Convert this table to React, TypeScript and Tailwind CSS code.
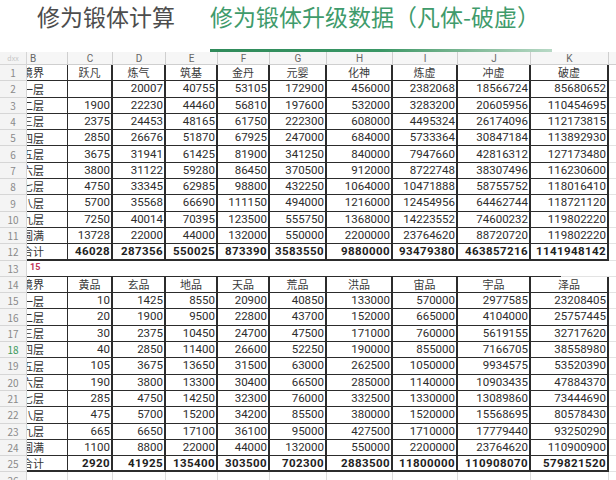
import React from "react";

// column widths for B..K, then L fills the rest
const colW = [
  "w-[41px]",
  "w-[45px]",
  "w-[53px]",
  "w-[52px]",
  "w-[52px]",
  "w-[57px]",
  "w-[66px]",
  "w-[65px]",
  "w-[73px]",
  "w-[78px]",
];

const letters = ["B", "C", "D", "E", "F", "G", "H", "I", "J", "K"];

const head1 = ["境界", "跃凡", "炼气", "筑基", "金丹", "元婴", "化神", "炼虚", "冲虚", "破虚"];
const head2 = ["境界", "黄品", "玄品", "地品", "天品", "荒品", "洪品", "宙品", "宇品", "泽品"];

const table1: (string | number)[][] = [
  ["一层", "", 20007, 40755, 53105, 172900, 456000, 2382068, 18566724, 85680652],
  ["二层", 1900, 22230, 44460, 56810, 197600, 532000, 3283200, 20605956, 110454695],
  ["三层", 2375, 24453, 48165, 61750, 222300, 608000, 4495324, 26174096, 112173815],
  ["四层", 2850, 26676, 51870, 67925, 247000, 684000, 5733364, 30847184, 113892930],
  ["五层", 3675, 31941, 61425, 81900, 341250, 840000, 7947660, 42816312, 127173480],
  ["六层", 3800, 31122, 59280, 86450, 370500, 912000, 8722748, 38307496, 116230600],
  ["七层", 4750, 33345, 62985, 98800, 432250, 1064000, 10471888, 58755752, 118016410],
  ["八层", 5700, 35568, 66690, 111150, 494000, 1216000, 12454956, 64462744, 118721120],
  ["九层", 7250, 40014, 70395, 123500, 555750, 1368000, 14223552, 74600232, 119802220],
  ["圆满", 13728, 22000, 44000, 132000, 550000, 2200000, 23764620, 88720720, 119802220],
];
const total1 = ["合计", 46028, 287356, 550025, 873390, 3583550, 9880000, 93479380, 463857216, 1141948142];

const table2: (string | number)[][] = [
  ["一层", 10, 1425, 8550, 20900, 40850, 133000, 570000, 2977585, 23208405],
  ["二层", 20, 1900, 9500, 22800, 43700, 152000, 665000, 4104000, 25757445],
  ["三层", 30, 2375, 10450, 24700, 47500, 171000, 760000, 5619155, 32717620],
  ["四层", 40, 2850, 11400, 26600, 52250, 190000, 855000, 7166705, 38558980],
  ["五层", 105, 3675, 13650, 31500, 63000, 262500, 1050000, 9934575, 53520390],
  ["六层", 190, 3800, 13300, 30400, 66500, 285000, 1140000, 10903435, 47884370],
  ["七层", 285, 4750, 14250, 32300, 76000, 332500, 1330000, 13089860, 73444690],
  ["八层", 475, 5700, 15200, 34200, 85500, 380000, 1520000, 15568695, 80578430],
  ["九层", 665, 6650, 17100, 36100, 95000, 427500, 1710000, 17779440, 93250290],
  ["圆满", 1100, 8800, 22000, 44000, 132000, 550000, 2200000, 23764620, 110900900],
];
const total2 = ["合计", 2920, 41925, 135400, 303500, 702300, 2883500, 11800000, 110908070, 579821520];

function RowNum({ n, green }: { n: number | string; green?: boolean }) {
  return (
    <div
      className={`w-[27px] shrink-0 flex items-center justify-center bg-[#f4f4f4] border-r border-b border-[#d6d6d6] text-[10px] ${
        green ? "text-[#3c9a5c]" : "text-[#8a8a8a]"
      }`}
    >
      {n}
    </div>
  );
}

function DataRow({
  n,
  cells,
  kind,
  thick,
}: {
  n: number;
  cells: (string | number)[];
  kind: "head" | "num" | "total";
  thick?: boolean;
}) {
  return (
    <div className="flex h-[16.3px]">
      <RowNum n={n} green={n === 18} />
      {cells.map((c, i) => {
        const base = `${colW[i]} shrink-0 overflow-hidden flex items-center whitespace-nowrap border-[#2c2c2c] ${
          thick ? "border-b-2" : "border-b"
        } ${i === 0 ? "border-r" : "border-r-2"}`;
        if (i === 0) {
          return (
            <div key={i} className={`${base} text-[11px] text-[#333]`}>
              <span className="ml-[-5px]">{c}</span>
            </div>
          );
        }
        if (kind === "head") {
          return (
            <div key={i} className={`${base} justify-center text-[11px] text-[#3a3a3a]`}>
              {c}
            </div>
          );
        }
        return (
          <div
            key={i}
            className={`${base} justify-end pr-[1px] text-[11.5px] font-['Roboto',sans-serif] ${
              kind === "total" ? "font-bold tracking-[0.4px] text-[#222]" : "text-[#2d2d2d]"
            }`}
          >
            {c}
          </div>
        );
      })}
      <div className="flex-1 border-b border-[#e3e3e3]" />
    </div>
  );
}

export default function App() {
  return (
    <div className="w-[616px] h-[480px] overflow-hidden bg-white font-['Noto_Sans_CJK_SC','Noto_Sans',sans-serif]">
      {/* title */}
      <div className="h-[48px] flex items-start">
        <div className="ml-[37px] mt-[1px] leading-[30px] text-[23px] text-[#4d4d4d]">修为锻体计算</div>
        <div className="ml-[35px] mt-[1px] leading-[30px] text-[23px] text-[#3f9b6b]">修为锻体升级数据（凡体-破虚）</div>
      </div>
      <div className="h-[4px] flex">
        <div className="ml-[210px] mt-[1px] w-[342px] h-[3px] bg-gradient-to-r from-[#2f8a5a] via-[#3a9766] to-[#b8d9c6]" />
      </div>

      {/* column letters */}
      <div className="flex h-[13px]">
        <div className="w-[27px] shrink-0 flex items-center justify-center bg-[#f4f4f4] border-r border-b border-[#d6d6d6] text-[7px] text-[#c4c4c4]">
          dxx
        </div>
        {letters.map((l, i) => (
          <div
            key={l}
            className={`${colW[i]} shrink-0 flex items-center ${
              i === 0 ? "justify-start pl-[3px]" : "justify-center"
            } bg-[#f6f6f6] border-r border-b border-[#cfcfcf] text-[10px] text-[#666] font-['Roboto',sans-serif]`}
          >
            {l}
          </div>
        ))}
        <div className="flex-1 bg-[#f6f6f6] border-b border-[#cfcfcf]" />
      </div>

      {/* first table */}
      <DataRow n={1} cells={head1} kind="head" />
      {table1.map((r, i) => (
        <DataRow key={i} n={i + 2} cells={r} kind="num" />
      ))}
      <DataRow n={12} cells={total1} kind="total" thick />

      {/* gap row */}
      <div className="flex h-[16.3px]">
        <RowNum n={13} />
        <div className="w-[534px] shrink-0 flex items-center border-b border-[#2c2c2c]">
          <span className="ml-[3px] text-[9px] font-bold text-[#c2355a] font-['Roboto',sans-serif]">15</span>
        </div>
        <div className="flex-1 border-b border-[#e3e3e3]" />
      </div>

      {/* second table */}
      <DataRow n={14} cells={head2} kind="head" />
      {table2.map((r, i) => (
        <DataRow key={i} n={i + 15} cells={r} kind="num" />
      ))}
      <DataRow n={25} cells={total2} kind="total" thick />

      <div className="flex h-[16.3px]">
        <RowNum n={26} />
        {colW.map((w, i) => (
          <div key={i} className={`${w} shrink-0 border-r border-[#dcdcdc]`} />
        ))}
      </div>
    </div>
  );
}
